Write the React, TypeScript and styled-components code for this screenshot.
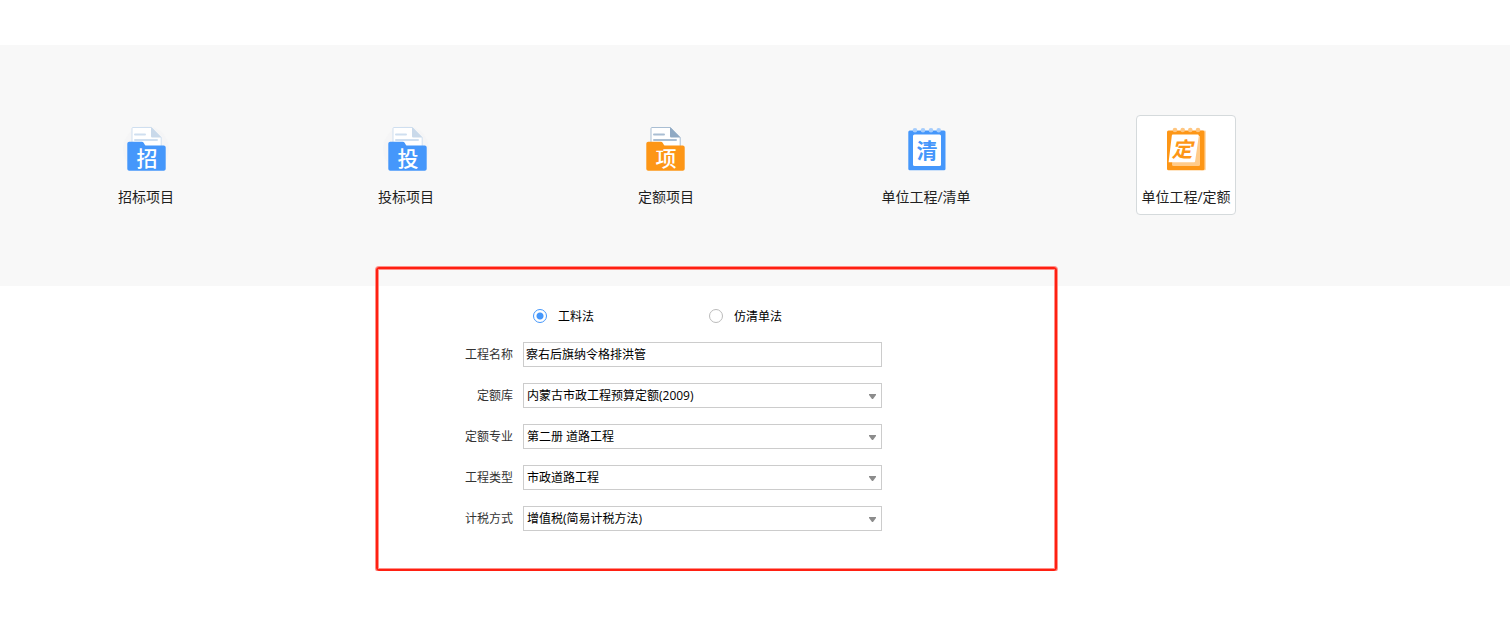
import React, { useState } from "react";
import styled, { createGlobalStyle } from "styled-components";

const uiFont = `"Open Sans", "Noto Sans CJK SC", sans-serif`;

const GlobalStyle = createGlobalStyle`
  *, *::before, *::after { box-sizing: border-box; }
  body {
    margin: 0;
    background: #fff;
    color: #1f1f1f;
    font-family: ${uiFont};
    font-size: 12px;
  }
  button, input, select { font: inherit; color: inherit; }
`;

const Page = styled.main`
  padding-top: 45px;
`;

const TypeBand = styled.nav`
  display: flex;
  justify-content: space-between;
  padding: 70px 274px 71px 96px;
  background: #f8f8f8;
`;

const TypeTile = styled.button<{ $selected: boolean }>`
  display: flex;
  flex-direction: column;
  align-items: center;
  gap: 14px;
  width: 100px;
  height: 100px;
  padding: 9px 0 0;
  border: 1px solid ${(p) => (p.$selected ? "#d5dadc" : "transparent")};
  border-radius: 4px;
  background: ${(p) => (p.$selected ? "#fff" : "transparent")};
  cursor: pointer;
`;

const TileIcon = styled.svg`
  display: block;
  flex: none;
  width: 48px;
  height: 48px;
`;

const TileLabel = styled.span`
  font-size: 14px;
  line-height: 20px;
  white-space: nowrap;
`;

const Glyph = styled.text<{ $bold?: boolean }>`
  font-family: "Noto Sans CJK SC", sans-serif;
  font-weight: ${(p) => (p.$bold ? 700 : 500)};
  text-anchor: middle;
`;

const ProjectForm = styled.form`
  position: relative;
  display: flex;
  flex-direction: column;
  gap: 16px;
  margin: -19px 30% 0 376px;
  padding: 37px 173px 38px 87px;
  border: 2px solid #ff2012;
  border-radius: 3px;
  box-shadow: 0 0 0 1px #ff9089, inset 0 0 0 1px #ff9089;
`;

const MethodGroup = styled.div`
  display: flex;
  height: 20px;
  padding-left: 68px;
`;

const MethodOption = styled.label`
  display: flex;
  flex: none;
  align-items: center;
  gap: 11px;
  width: 176px;
  color: #000;
`;

const Radio = styled.input`
  appearance: none;
  width: 14px;
  height: 14px;
  margin: 0;
  border: 1px solid #bbb;
  border-radius: 50%;
  background: #fff;

  &:checked {
    border-color: #4597fb;
    background: radial-gradient(circle, #4597fb 3px, #fff 4px);
  }
`;

const Field = styled.div`
  display: grid;
  grid-template-columns: 48px 1fr;
  column-gap: 10px;
  align-items: start;
`;

const FieldLabel = styled.label`
  color: #333;
  line-height: 25px;
  text-align: right;
  white-space: nowrap;
`;

const TextBox = styled.input`
  width: 100%;
  height: 25px;
  padding: 0 2px 1px;
  border: 1px solid #ccc;
  background: #fff;
  color: #000;
`;

const SelectShell = styled.div`
  display: grid;
  align-items: center;

  > * { grid-area: 1 / 1; }
`;

const SelectBox = styled.select`
  appearance: none;
  width: 100%;
  height: 25px;
  padding: 0 20px 0 3px;
  border: 1px solid #ccc;
  border-radius: 0;
  background: #fff;
  color: #000;
`;

const Arrow = styled.svg`
  justify-self: end;
  width: 7px;
  height: 5px;
  margin: 2px 6px 0 0;
  pointer-events: none;
`;

interface FolderProps {
  glyph: string;
  color: string;
  line: string;
  fold: string;
  shift: number;
  halo?: boolean;
}

function FolderIcon({ glyph, color, line, fold, shift, halo }: FolderProps) {
  return (
    <TileIcon viewBox="0 0 48 48" aria-hidden="true">
      {halo && <circle cx="24" cy="24" r="23" fill="#f5f5f6" />}
      <g transform={`translate(${shift} 0)`}>
        <path d="M11 2.500h18.500l9.700 10V30H10V3.500a1 1 0 0 1 1-1z" fill="#fff" stroke={line} />
        <path d="M29 2.300v8.900c0 .7.600 1.300 1.300 1.300h9.100z" fill={fold} />
        <path d="M13 9.500h10M13 15h22" stroke={line} strokeWidth="2" strokeLinecap="round" />
        <path
          d="M7.300 16.800h12.400c1 0 1.700.4 2.100 1.200l1 1.700c.3.600.9.900 1.600.9h17.300c1.100 0 2 .9 2 2v21.100c0 1.100-.9 2-2 2H7.300c-1.100 0-2-.9-2-2V18.800c0-1.100.9-2 2-2z"
          fill={color}
        />
        <Glyph x="25" y="41" fontSize="21" fill="#fff">{glyph}</Glyph>
      </g>
    </TileIcon>
  );
}

function ListNotebookIcon() {
  return (
    <TileIcon viewBox="0 0 48 48" aria-hidden="true">
      <rect x="6.300" y="5.500" width="37.200" height="39.700" rx="1.500" fill="#4597fb" />
      <rect x="11" y="9.500" width="28" height="31.500" rx="1.500" fill="#fff" />
      {[13, 21, 29, 36.7].map((x) => (
        <circle key={x} cx={x} cy="5.300" r="2.300" fill="#a5cdfd" />
      ))}
      <Glyph $bold x="25" y="33" fontSize="21" fill="#4597fb">清</Glyph>
    </TileIcon>
  );
}

function QuotaNotebookIcon() {
  return (
    <TileIcon viewBox="0 0 48 48" aria-hidden="true">
      <rect x="38" y="5.500" width="6" height="39.700" rx="1" fill="#ffdcb0" />
      <rect x="5" y="5.500" width="37.500" height="39.700" rx="1.500" fill="#fd9616" />
      <path d="M12 11h26v28.500a1.500 1.500 0 0 1-1.500 1.500h-25a1.500 1.500 0 0 1-1.500-1.500z" fill="#ffcb8a" />
      <path d="M11 9.600h24.700c.7 0 1.200.6 1.100 1.300l-3.700 25.400c-.1.600-.6 1-1.200 1H6.600l3.200-26.600c.1-.6.6-1.100 1.200-1.100z" fill="#fff" />
      {[13, 20.7, 28.3, 36].map((x) => (
        <circle key={x} cx={x} cy="5" r="2.300" fill="#ffc680" />
      ))}
      <Glyph $bold x="20" y="32" fontSize="21" fontStyle="italic" fill="#fd9616">定</Glyph>
    </TileIcon>
  );
}

const blueFolder = { color: "#4597fb", line: "#cfdff0", fold: "#c9d9ea" };
const orangeFolder = { color: "#fd9616", line: "#a9bed3", fold: "#8fa9c3" };

const projectTypes = [
  { name: "招标项目", icon: <FolderIcon glyph="招" shift={0} halo {...blueFolder} /> },
  { name: "投标项目", icon: <FolderIcon glyph="投" shift={1} halo {...blueFolder} /> },
  { name: "定额项目", icon: <FolderIcon glyph="项" shift={-1} {...orangeFolder} /> },
  { name: "单位工程/清单", icon: <ListNotebookIcon /> },
  { name: "单位工程/定额", icon: <QuotaNotebookIcon /> },
];

const methods = ["工料法", "仿清单法"];

const selectFields = [
  { id: "library", label: "定额库", value: "内蒙古市政工程预算定额(2009)" },
  { id: "specialty", label: "定额专业", value: "第二册 道路工程" },
  { id: "category", label: "工程类型", value: "市政道路工程" },
  { id: "tax", label: "计税方式", value: "增值税(简易计税方法)" },
];

export default function App() {
  const [selected, setSelected] = useState("单位工程/定额");
  const [method, setMethod] = useState("工料法");

  return (
    <Page>
      <GlobalStyle />
      <TypeBand>
        {projectTypes.map((t) => (
          <TypeTile
            key={t.name}
            type="button"
            $selected={t.name === selected}
            aria-pressed={t.name === selected}
            onClick={() => setSelected(t.name)}
          >
            {t.icon}
            <TileLabel>{t.name}</TileLabel>
          </TypeTile>
        ))}
      </TypeBand>

      <ProjectForm>
        <MethodGroup role="radiogroup">
          {methods.map((m) => (
            <MethodOption key={m}>
              <Radio type="radio" name="method" checked={m === method} onChange={() => setMethod(m)} />
              {m}
            </MethodOption>
          ))}
        </MethodGroup>

        <Field>
          <FieldLabel htmlFor="name">工程名称</FieldLabel>
          <TextBox id="name" type="text" defaultValue="察右后旗纳令格排洪管" />
        </Field>

        {selectFields.map((f) => (
          <Field key={f.id}>
            <FieldLabel htmlFor={f.id}>{f.label}</FieldLabel>
            <SelectShell>
              <SelectBox id={f.id} defaultValue={f.value}>
                <option>{f.value}</option>
              </SelectBox>
              <Arrow viewBox="0 0 7 5" aria-hidden="true">
                <path d="M0 0h7v1L4 5H3L0 1z" fill="#8c8c8c" />
              </Arrow>
            </SelectShell>
          </Field>
        ))}
      </ProjectForm>
    </Page>
  );
}
